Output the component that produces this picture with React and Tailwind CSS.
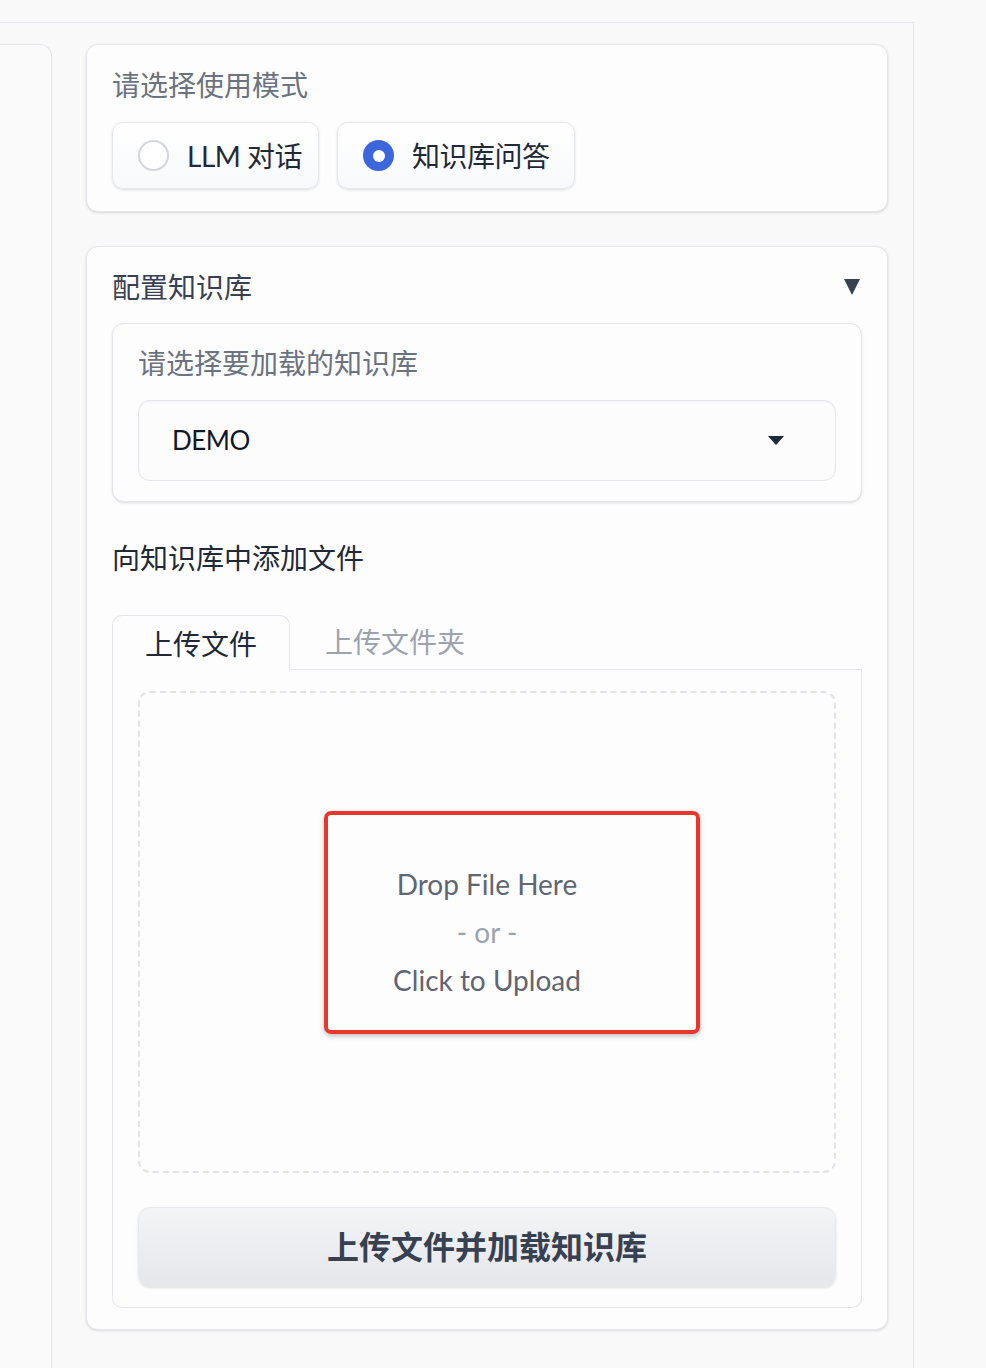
const font = { fontFamily: "Lato, 'Noto Sans CJK SC', sans-serif" };

function Radio({ checked, label, width }) {
  return (
    <label
      className={`flex items-center gap-[18px] h-[67px] pl-[25px] rounded-[11px] border border-[#e5e7eb] bg-gradient-to-b from-white to-[#f8f9fb] shadow-sm ${width}`}
    >
      {checked ? (
        <span className="w-[31px] h-[31px] rounded-full bg-[#3c66db] flex items-center justify-center">
          <span className="w-[12px] h-[12px] rounded-full bg-white" />
        </span>
      ) : (
        <span className="w-[31px] h-[31px] rounded-full border-2 border-[#d4d6dc] bg-white" />
      )}
      <span className="text-[28px] leading-[38px] tracking-[-0.5px] text-[#1f2937]">{label}</span>
    </label>
  );
}

export default function App() {
  return (
    <div className="min-h-screen h-[1368px] overflow-hidden bg-[#f9f9fa] pt-[22px]" style={font}>
      <div className="w-[914px] h-[1400px] border-t border-r border-[#e4e5ea] pt-[21px] pr-[25px] flex gap-[34px]">
        {/* left column, mostly off screen */}
        <div className="w-[52px] h-full border-t border-r border-[#e4e5ea] rounded-tr-[12px] bg-[#fafafb]" />

        <div className="flex-1 flex flex-col gap-[34px]">
          {/* mode selection */}
          <div className="rounded-[12px] border border-[#e4e5ea] bg-[#fdfdfd] shadow-sm px-[25px] pt-[21px] pb-[22px]">
            <p className="text-[28px] leading-[38px] text-[#6b7280]">请选择使用模式</p>
            <div className="flex gap-[18px] mt-[18px]">
              <Radio label="LLM 对话" width="w-[207px]" />
              <Radio checked label="知识库问答" width="w-[238px]" />
            </div>
          </div>

          {/* knowledge base config */}
          <div className="rounded-[12px] border border-[#e4e5ea] bg-[#fdfdfd] shadow-sm px-[25px] pt-[21px] pb-[21px]">
            <div className="flex items-center justify-between">
              <span className="text-[28px] leading-[38px] text-[#374151]">配置知识库</span>
              <svg width="18" height="18" viewBox="0 0 18 18" className="mr-[1px]">
                <polygon points="1,1 17,1 9,17" fill="#374151" />
              </svg>
            </div>

            <div className="mt-[17px] rounded-[12px] border border-[#e4e5ea] bg-[#fdfdfd] shadow-sm px-[25px] pt-[20px] pb-[20px]">
              <p className="text-[28px] leading-[38px] text-[#6b7280]">请选择要加载的知识库</p>
              <div className="mt-[18px] h-[81px] rounded-[12px] border border-[#e4e5ea] bg-[#fcfcfd] shadow-[inset_0_1px_2px_rgba(0,0,0,0.04)] flex items-center justify-between pl-[33px] pr-[51px]">
                <span className="text-[26px] tracking-[-0.5px] text-[#111827]">DEMO</span>
                <svg width="16" height="9" viewBox="0 0 16 9">
                  <polygon points="0,0 16,0 8,9" fill="#1f2937" />
                </svg>
              </div>
            </div>

            <p className="mt-[37px] text-[28px] leading-[38px] text-[#1f2937]">向知识库中添加文件</p>

            {/* tabs */}
            <div className="mt-[38px] flex items-end">
              <div className="w-[178px] h-[56px] border border-b-0 border-[#e4e5ea] rounded-t-[10px] bg-[#fdfdfd] flex items-center justify-center text-[28px] text-[#1f2937] relative -mb-px z-10">
                上传文件
              </div>
              <div className="flex-1 h-[55px] border-b border-[#e4e5ea] flex items-center pl-[35px] text-[28px] text-[#9ca3af]">
                上传文件夹
              </div>
            </div>
            <div className="border border-t-0 border-[#e4e5ea] rounded-b-[10px] px-[25px] pt-[21px] pb-[20px]">
              <div className="relative h-[482px] rounded-[12px] border-2 border-dashed border-[#e2e3e8] flex flex-col items-center justify-center">
                <span className="text-[28px] leading-[48px] text-[#5f6673]">Drop File Here</span>
                <span className="text-[28px] leading-[48px] text-[#9ca3af]">- or -</span>
                <span className="text-[28px] leading-[48px] text-[#5f6673]">Click to Upload</span>
                <div className="absolute left-[184px] top-[118px] w-[376px] h-[223px] border-[4px] border-[#e8382d] rounded-[7px] shadow-[0_2px_5px_rgba(0,0,0,0.25)]" />
              </div>
              <button className="mt-[34px] w-full h-[80px] rounded-[12px] bg-gradient-to-b from-[#f3f4f6] to-[#e5e7eb] shadow-sm border border-[#e8e9ed] text-[32px] font-bold text-[#374151]">
                上传文件并加载知识库
              </button>
            </div>
          </div>
        </div>
      </div>
    </div>
  );
}
